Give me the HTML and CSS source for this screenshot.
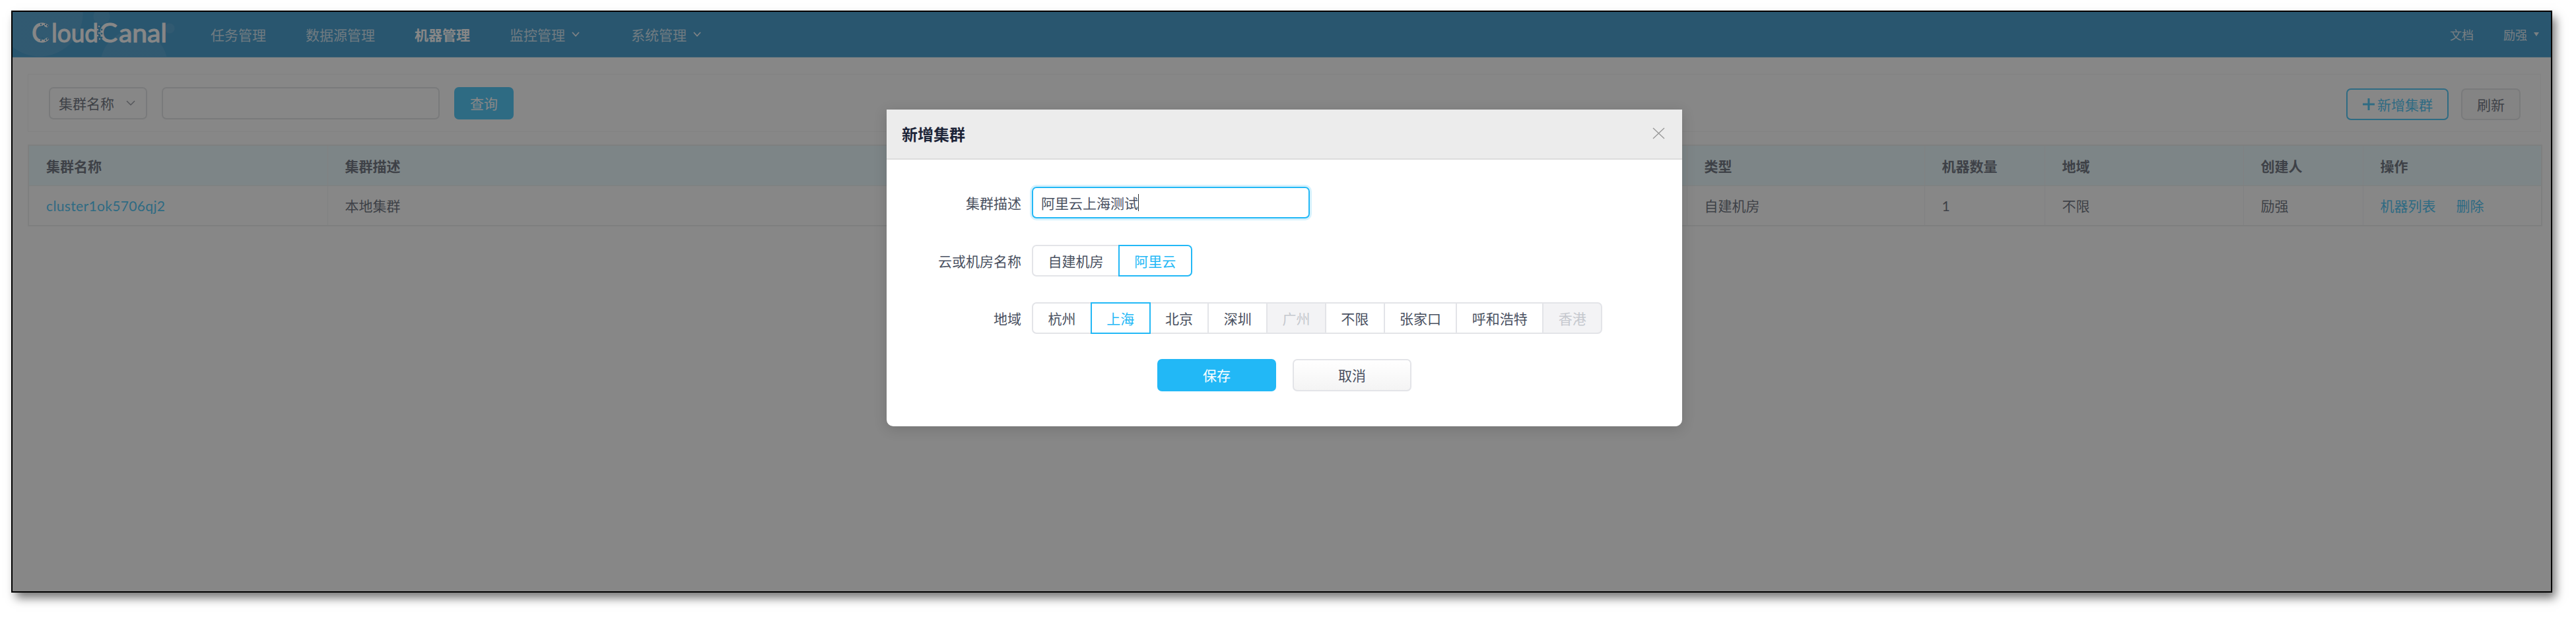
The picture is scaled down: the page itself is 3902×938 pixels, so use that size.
FILE: index.html
```html
<!DOCTYPE html>
<html lang="zh-CN">
<head>
<meta charset="UTF-8">
<title>CloudCanal</title>
<link rel="stylesheet" href="styles.css">
</head>
<body>
<div class="window">
  <header class="topbar">
    <svg class="logo" width="210" height="60" viewBox="0 0 210 60">
      <text class="logo-text" x="0" y="42" font-size="41" textLength="26" lengthAdjust="spacingAndGlyphs">C</text>
      <text class="logo-text" x="30" y="42" font-size="38" textLength="71" lengthAdjust="spacingAndGlyphs">loud</text>
      <text class="logo-text" x="102" y="42" font-size="41" textLength="28" lengthAdjust="spacingAndGlyphs">C</text>
      <text class="logo-text" x="132" y="42" font-size="38" textLength="73" lengthAdjust="spacingAndGlyphs">anal</text>
      <g class="logo-dots">
        <circle cx="14" cy="15" r="1.2"/><circle cx="18" cy="17" r="1.2"/><circle cx="21" cy="15" r="1.2"/><circle cx="24" cy="17" r="1.2"/><circle cx="16" cy="19" r="1"/>
        <circle cx="14" cy="39" r="1.2"/><circle cx="18" cy="37" r="1.2"/><circle cx="21" cy="39" r="1.2"/><circle cx="24" cy="37" r="1.2"/><circle cx="16" cy="35" r="1"/>
        <circle cx="103" cy="20" r="1.4"/><circle cx="106" cy="23" r="1.4"/><circle cx="103" cy="26" r="1.4"/><circle cx="106" cy="29" r="1.4"/><circle cx="103" cy="32" r="1.4"/><circle cx="106" cy="35" r="1.4"/>
      </g>
      <g class="logo-dots-on">
        <circle cx="102" cy="18" r="1.2"/><circle cx="100" cy="23" r="1.2"/><circle cx="102" cy="28" r="1.2"/><circle cx="100" cy="32" r="1.2"/><circle cx="103" cy="37" r="1.2"/>
      </g>
    </svg>
    <nav class="nav">
      <a class="nav-item">任务管理</a>
      <a class="nav-item">数据源管理</a>
      <a class="nav-item active">机器管理</a>
      <a class="nav-item">监控管理<svg class="chev" width="12" height="8" viewBox="0 0 12 8"><path d="M1 1l5 5.5L11 1"/></svg></a>
      <a class="nav-item">系统管理<svg class="chev" width="12" height="8" viewBox="0 0 12 8"><path d="M1 1l5 5.5L11 1"/></svg></a>
    </nav>
    <div class="topbar-right">
      <a class="top-link">文档</a>
      <a class="top-link">励强<span class="caret"></span></a>
    </div>
  </header>

  <main class="content">
    <section class="toolbar">
      <div class="search">
        <div class="select">集群名称<svg class="select-arrow" width="14" height="9" viewBox="0 0 14 9"><path d="M1 1l6 6 6-6"/></svg></div>
        <div class="search-input"></div>
        <button class="btn-query">查询</button>
      </div>
      <div class="actions">
        <button class="btn-add"><svg width="20" height="20" viewBox="0 0 20 20"><path d="M10 1v18M1 10h18"/></svg>新增集群</button>
        <button class="btn-refresh">刷新</button>
      </div>
    </section>

    <table class="grid">
      <colgroup>
        <col class="c-name"><col class="c-desc"><col class="c-type"><col class="c-count"><col class="c-region"><col class="c-owner"><col class="c-ops">
      </colgroup>
      <thead>
        <tr><th>集群名称</th><th>集群描述</th><th>类型</th><th>机器数量</th><th>地域</th><th>创建人</th><th>操作</th></tr>
      </thead>
      <tbody>
        <tr>
          <td><a class="link cluster">cluster1ok5706qj2</a></td>
          <td>本地集群</td>
          <td>自建机房</td>
          <td>1</td>
          <td>不限</td>
          <td>励强</td>
          <td><a class="link op">机器列表</a><a class="link">删除</a></td>
        </tr>
      </tbody>
    </table>
  </main>

  <div class="mask">
    <div class="modal">
      <div class="modal-head">
        <span class="modal-title">新增集群</span>
        <svg class="modal-close" width="19" height="18" viewBox="0 0 19 18"><path d="M1 1l17 16M18 1L1 17"/></svg>
      </div>
      <div class="modal-body">
        <div class="field">
          <label class="field-label">集群描述</label>
          <div class="text-input">阿里云上海测试<span class="text-cursor"></span></div>
        </div>
        <div class="field">
          <label class="field-label">云或机房名称</label>
          <div class="radio-group">
            <span class="radio">自建机房</span>
            <span class="radio on">阿里云</span>
          </div>
        </div>
        <div class="field">
          <label class="field-label">地域</label>
          <div class="radio-group">
            <span class="radio">杭州</span>
            <span class="radio on">上海</span>
            <span class="radio">北京</span>
            <span class="radio">深圳</span>
            <span class="radio off">广州</span>
            <span class="radio">不限</span>
            <span class="radio">张家口</span>
            <span class="radio">呼和浩特</span>
            <span class="radio off">香港</span>
          </div>
        </div>
        <div class="modal-foot">
          <button class="btn-save">保存</button>
          <button class="btn-cancel">取消</button>
        </div>
      </div>
    </div>
  </div>
</div>
</body>
</html>
```

FILE: styles.css
```css
*{box-sizing:border-box;}
html,body{margin:0;height:100%;}
body{background:#fff;padding:16px 36px 40px 17px;overflow:hidden;font-family:"Lato","Noto Sans CJK SC",sans-serif;font-size:21px;color:#495060;}
button{font:inherit;cursor:pointer;}

.window{position:relative;height:100%;border:2px solid #000;background:#fff;box-shadow:6px 9px 14px -1px rgba(0,0,0,.55);overflow:hidden;}

/* top bar */
.topbar{display:flex;align-items:center;height:69px;padding:0 18px 0 29px;border-bottom:1px solid #3a9ad0;
  background:
    radial-gradient(circle at 41px 2px,rgba(255,255,255,.08) 65px,transparent 66px),
    radial-gradient(circle at 135px 7px,rgba(255,255,255,.08) 12px,transparent 13px),
    radial-gradient(circle at 238px 25px,rgba(255,255,255,.08) 7px,transparent 8px),
    radial-gradient(circle at 184px 79px,rgba(255,255,255,.08) 50px,transparent 51px),
    #1684c3;}
.logo{flex:none;margin-right:61px;}
.logo-text{font-family:"Lato",sans-serif;fill:#fff;stroke:#fff;stroke-width:1.1;}
.logo-dots{fill:#1684c3;}
.logo-dots-on{fill:#fff;}
.nav{display:flex;align-items:center;gap:60px;}
.nav-item{display:flex;align-items:center;color:rgba(255,255,255,.75);}
.nav-item.active{color:#fff;font-weight:700;}
.chev{margin:0 18px 0 10px;fill:none;stroke:rgba(255,255,255,.9);stroke-width:1.8;}
.topbar-right{display:flex;align-items:center;gap:45px;margin-left:auto;font-size:18px;}
.top-link{display:flex;align-items:center;color:rgba(255,255,255,.85);}
.caret{margin-left:10px;border:4px solid transparent;border-top:6px solid rgba(255,255,255,.85);border-bottom:0;}

/* search panel */
.content{padding:25px 15px 0 23px;}
.toolbar{display:flex;align-items:center;justify-content:space-between;height:88px;padding:0 30px 0 31px;border:1px solid #f3f3f3;}
.search{display:flex;gap:22px;}
.select{display:flex;align-items:center;justify-content:space-between;width:149px;height:49px;padding:0 16px 0 13px;border:2px solid #dddee1;border-radius:7px;}
.select-arrow{fill:none;stroke:#80848f;stroke-width:1.5;}
.search-input{width:421px;height:49px;border:2px solid #dddee1;border-radius:7px;}
.btn-query{width:90px;height:49px;border:0;border-radius:7px;background:#22b8f6;color:#fff;}
.actions{display:flex;gap:19px;margin-top:3px;}
.btn-add{display:flex;align-items:center;justify-content:center;gap:3px;width:155px;height:48px;padding:0;border:2px solid #22b8f6;border-radius:7px;background:#fff;color:#22b8f6;}
.btn-add svg{fill:none;stroke:#22b8f6;stroke-width:3;}
.btn-refresh{width:90px;height:48px;padding:0;border:2px solid #dddee1;border-radius:7px;background:#f7f7f7;color:#495060;}

/* table */
.grid{width:3807px;margin-top:19px;table-layout:fixed;border-collapse:collapse;border:2px solid #e9eaec;}
.c-name{width:453px;}
.c-desc{width:2059px;}
.c-type{width:360px;}
.c-count{width:182px;}
.c-region{width:301px;}
.c-owner{width:181px;}
.c-ops{width:271px;}
.grid th,.grid td{height:61px;padding:0 26px;text-align:left;border-right:1px solid #eef0f2;}
.grid th{background:#e6f9ff;font-weight:700;border-bottom:1px solid #e9eaec;}
.link{color:#22b8f6;}
.cluster{letter-spacing:.35px;}
.op{margin-right:31px;}

/* modal */
.mask{position:absolute;inset:0;display:flex;align-items:flex-start;justify-content:center;padding:148px 0 0 8px;background:rgba(55,55,55,.6);}
.modal{width:1205px;height:480px;background:#fff;border-radius:0 0 10px 10px;overflow:hidden;box-shadow:0 4px 20px rgba(0,0,0,.15);}
.modal-head{display:flex;align-items:center;justify-content:space-between;height:76px;padding:0 26px 2px 23px;background:#ececec;border-bottom:2px solid #ddd;}
.modal-title{font-size:24px;font-weight:700;color:#1c2438;}
.modal-close{fill:none;stroke:#999;stroke-width:1.4;}
.modal-body{padding-top:41px;}
.field{display:flex;align-items:center;gap:16px;height:48px;margin-bottom:39.5px;}
.field-label{width:204px;text-align:right;}
.text-input{display:flex;align-items:center;width:421px;height:48px;padding-left:12px;border:2px solid #22b8f6;border-radius:7px;box-shadow:0 0 0 3px rgba(34,184,246,.18);color:#495060;}
.text-cursor{width:1px;height:26px;background:#333;}
.radio-group{display:flex;}
.radio{display:flex;align-items:center;height:48px;padding:0 22.4px;margin-left:-2px;border:2px solid #e3e4e8;background:#fff;}
.radio:first-child{margin-left:0;border-radius:7px 0 0 7px;}
.radio:last-child{border-radius:0 7px 7px 0;}
.radio.on{position:relative;border-color:#22b8f6;color:#22b8f6;}
.radio.off{background:#f3f3f5;color:#c5c8ce;}
.modal-foot{display:flex;justify-content:center;gap:25px;margin-top:-2px;}
.btn-save{width:180px;height:49px;border:0;border-radius:7px;background:#22b8f6;color:#fff;}
.btn-cancel{width:180px;height:49px;border:2px solid #e3e4e8;border-radius:7px;background:linear-gradient(#fff,#f4f4f4);color:#495060;}
```
